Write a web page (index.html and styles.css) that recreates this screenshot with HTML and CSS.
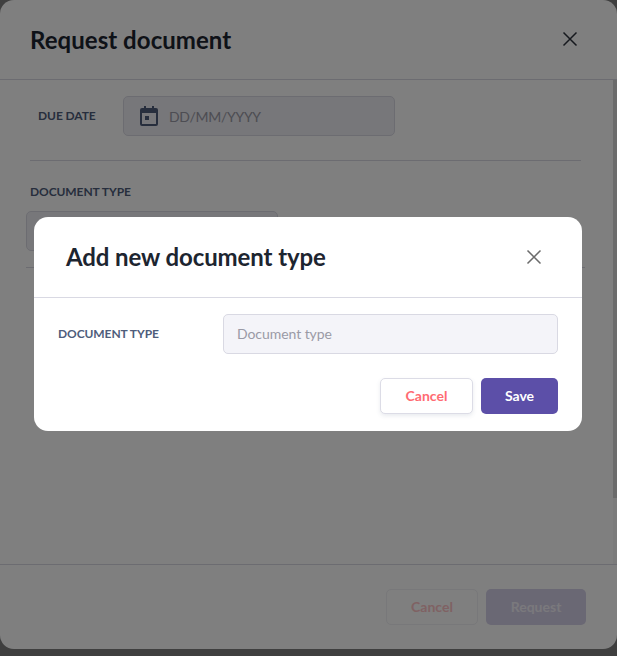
FILE: index.html
```html
<!DOCTYPE html>
<html lang="en">
<head>
<meta charset="utf-8">
<title>Request document</title>
<link rel="stylesheet" href="styles.css">
</head>
<body>
<div class="sheet">
  <header class="sheet-head">
    <h1 class="sheet-title">Request document</h1>
    <svg class="x x-back" viewBox="0 0 16 16" aria-hidden="true"><path d="M1.5 1.5l13 13M14.5 1.5l-13 13"/></svg>
  </header>
  <main class="sheet-body">
    <div class="due-row">
      <span class="label due-label">DUE DATE</span>
      <div class="date-input">
        <svg class="cal" viewBox="0 0 18 20" aria-hidden="true"><path d="M4 0h2v2h6V0h2v2h2a2 2 0 0 1 2 2v14a2 2 0 0 1-2 2H2a2 2 0 0 1-2-2V4a2 2 0 0 1 2-2h2zM2 7v11h14V7zM5 10h4v4H5z" fill-rule="evenodd"/></svg>
        <span class="date-ph">DD/MM/YYYY</span>
      </div>
    </div>
    <div class="rule"></div>
    <div class="label type-label">DOCUMENT TYPE</div>
    <div class="select-box"></div>
    <div class="rule-wide"></div>
    <div class="scroll-track"><div class="scroll-thumb"></div></div>
  </main>
  <footer class="sheet-foot">
    <button class="btn btn-ghost back-cancel">Cancel</button>
    <button class="btn btn-primary back-request">Request</button>
  </footer>
</div>
<div class="scrim"></div>
<section class="dialog">
  <header class="dialog-head">
    <h2 class="dialog-title">Add new document type</h2>
    <svg class="x x-front" viewBox="0 0 16 16" aria-hidden="true"><path d="M1.5 1.5l13 13M14.5 1.5l-13 13"/></svg>
  </header>
  <div class="dialog-row">
    <label class="label dialog-label">DOCUMENT TYPE</label>
    <div class="text-input">Document type</div>
  </div>
  <div class="dialog-actions">
    <button class="btn btn-ghost front-cancel">Cancel</button>
    <button class="btn btn-primary front-save">Save</button>
  </div>
</section>
</body>
</html>
```
FILE: styles.css
```css
* { box-sizing: border-box; }
html, body { margin: 0; height: 656px; overflow: hidden; }
body { position: relative; background: #7f7f7f; font-family: Lato, "Liberation Sans", sans-serif; color: #1d2530; }
h1, h2 { margin: 0; font-weight: 700; }
.sheet { width: 617px; height: 649px; background: #fff; border-radius: 14px; display: flex; flex-direction: column; overflow: hidden; }
.sheet-head { height: 80px; flex: none; display: flex; align-items: center; justify-content: space-between; padding: 0 39px 0 30px; border-bottom: 1px solid #d9d9e3; }
.sheet-title { font-size: 24px; line-height: 30px; letter-spacing: .05px; }
.x { fill: none; stroke: currentColor; stroke-width: 1.5; }
.x-back { width: 16px; height: 16px; color: #2c333d; margin-top: -2px; }
.sheet-body { position: relative; flex: 1; padding: 16px 32px 0 26px; }
.due-row { display: flex; align-items: center; height: 40px; }
.label { font-size: 12px; font-weight: 700; color: #4e5d7b; line-height: 16px; letter-spacing: -.08px; }
.due-label { width: 97px; padding-left: 12px; margin-top: -1px; }
.date-input { width: 272px; height: 40px; background: #eeeef4; border: 1px solid #d9d9e3; border-radius: 5px; display: flex; align-items: center; padding-left: 16px; }
.cal { width: 18px; height: 20px; fill: #4e5d7b; }
.date-ph { margin-left: 11px; font-size: 14px; color: #9a9aa6; letter-spacing: -.3px; }
.rule { height: 1px; background: #d9d9e3; margin: 24px 0 0 4px; width: 551px; }
.type-label { margin: 23px 0 0 4px; }
.select-box { width: 252px; height: 40px; margin-top: 11px; background: #eeeef4; border: 1px solid #d9d9e3; border-radius: 5px; }
.rule-wide { height: 1px; background: #d9d9e3; margin-top: 16px; width: 559px; }
.scroll-track { position: absolute; top: 0; right: 0; bottom: 0; width: 4px; background: #f6f6f6; }
.scroll-thumb { height: 418px; background: #d6d6d6; }
.sheet-foot { height: 85px; flex: none; display: flex; justify-content: flex-end; gap: 8px; padding: 24px 31px 0 0; border-top: 1px solid #d9d9e3; }
.btn { font-family: inherit; font-size: 14px; font-weight: 700; border-radius: 5px; height: 36px; padding: 0 0 2px; }
.btn-ghost { background: #fff; border: 1px solid #dcdce6; color: #ff6b72; box-shadow: 0 2px 4px rgba(78, 93, 123, .12); }
.btn-primary { background: #5c4fa8; border: 0; color: #fff; }
.back-cancel { width: 92px; box-shadow: none; border-color: #f0f0f4; color: #ffc4c7; }
.back-request { width: 100px; background: #d4d0e8; color: #f4f2fa; }
.scrim { position: absolute; inset: 0; background: rgba(0, 0, 0, .5); }
.dialog { position: absolute; left: 34px; top: 217px; width: 548px; height: 214px; background: #fff; border-radius: 14px; }
.dialog-head { height: 81px; display: flex; align-items: center; justify-content: space-between; padding: 0 40px 0 32px; border-bottom: 1px solid #d9d9e3; }
.dialog-title { font-size: 24px; line-height: 30px; letter-spacing: -.1px; }
.x-front { width: 16px; height: 16px; color: #6b6b6b; }
.dialog-row { display: flex; align-items: center; height: 40px; margin-top: 16px; padding: 0 24px; }
.dialog-label { width: 165px; margin-top: -1px; }
.text-input { flex: 1; height: 40px; background: #f4f4f9; border: 1px solid #d9d9e3; border-radius: 5px; font-size: 14px; color: #9a9aa6; line-height: 38px; padding-left: 13px; letter-spacing: -.06px; }
.dialog-actions { display: flex; justify-content: flex-end; gap: 8px; padding: 24px 24px 0 0; }
.front-cancel { width: 93px; }
.front-save { width: 77px; }
```
